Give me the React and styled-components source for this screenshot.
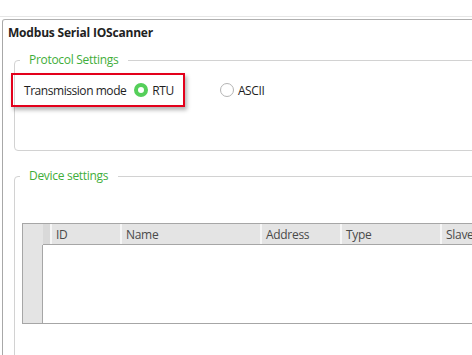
import styled, { createGlobalStyle } from "styled-components";

const GlobalStyle = createGlobalStyle`
  html, body {
    margin: 0;
    padding: 0;
    background: #ffffff;
    overflow: hidden;
  }
  body {
    font-family: "Open Sans", "Noto Sans", sans-serif;
    font-size: 12px;
    color: #1e1e1e;
  }
`;

const Page = styled.div`
  width: 472px;
  height: 355px;
  overflow: hidden;
`;

const TopStrip = styled.div`
  height: 16px;
  border-bottom: 1px solid #e6e6e6;
`;

const Panel = styled.div`
  margin: 2px 0 0 2px;
  width: 640px;
  height: 400px;
  border-top: 1px solid #b0b0b0;
  border-left: 1px solid #a8a8a8;
  border-top-left-radius: 3px;
`;

const Title = styled.div`
  padding: 5px 0 0 5px;
  font-weight: 700;
  font-size: 12px;
  line-height: 16px;
  color: #222;
  letter-spacing: -0.2px;
`;

const Group = styled.fieldset`
  margin: ${(p) => p.$top}px 0 0 11px;
  padding: 0 0 0 5px;
  width: 600px;
  height: ${(p) => p.$height}px;
  border: 1px solid #d2d2d2;
  border-radius: 4px;
  box-sizing: border-box;
`;

const Legend = styled.legend`
  padding: 0 10px 0 9px;
  font-size: 12px;
  line-height: 16px;
  color: #3fae3a;
  letter-spacing: -0.3px;
`;

const ModeRow = styled.div`
  display: flex;
  align-items: center;
  margin: 5px 0 0 -9px;
`;

const Highlight = styled.div`
  display: flex;
  align-items: center;
  gap: 8px;
  height: 30px;
  padding: 0 9px 0 11px;
  border: 2px solid #e3001b;
  box-shadow: 2px 3px 4px rgba(0, 0, 0, 0.3);
`;

const Label = styled.span`
  font-size: 12px;
  letter-spacing: -0.45px;
  color: #1e1e1e;
`;

const Radio = styled.label`
  display: flex;
  align-items: center;
  gap: 4px;
  margin-left: ${(p) => p.$offset || 0}px;
  font-size: 12px;
  letter-spacing: -0.4px;
  color: #1e1e1e;
`;

const Dot = styled.span`
  display: inline-block;
  box-sizing: border-box;
  width: 14px;
  height: 14px;
  border-radius: 50%;
  border: ${(p) => (p.$checked ? "4px solid #55cf5a" : "1px solid #b4b4b4")};
  background: #fff;
`;

const Grid = styled.div`
  margin: 39px 0 0 2px;
  width: 560px;
  height: 99px;
  border: 1px solid #a6a6a6;
  display: grid;
  grid-template-columns: 20px 1fr;
  grid-template-rows: 21px 1fr;
  background: #fff;
`;

const Corner = styled.div`
  background: #e4e4e4;
`;

const HeaderRow = styled.div`
  display: flex;
  background: #e4e4e4;
  border-bottom: 1px solid #a6a6a6;
  padding-left: 7px;
  box-shadow: inset 7px 0 0 #d9d9d9;
`;

const HeaderCell = styled.div`
  width: ${(p) => p.$w}px;
  flex: none;
  box-sizing: border-box;
  padding-left: 4px;
  border-left: 2px solid #f6f6f6;
  font-size: 12px;
  line-height: 21px;
  color: #4a4a4a;
  letter-spacing: -0.3px;
`;

const RowHeader = styled.div`
  background: #e4e4e4;
  border-right: 1px solid #a6a6a6;
`;

const Body = styled.div`
  background: #fff;
`;

const columns = [
  { name: "ID", w: 70 },
  { name: "Name", w: 140 },
  { name: "Address", w: 80 },
  { name: "Type", w: 100 },
  { name: "Slave", w: 100 },
];

export default function App() {
  return (
    <Page>
      <GlobalStyle />
      <TopStrip />
      <Panel>
        <Title>Modbus Serial IOScanner</Title>
        <Group $top={11} $height={99}>
          <Legend>Protocol Settings</Legend>
          <ModeRow>
            <Highlight>
              <Label>Transmission mode</Label>
              <Radio>
                <Dot $checked />
                RTU
              </Radio>
            </Highlight>
            <Radio $offset={35}>
              <Dot />
              ASCII
            </Radio>
          </ModeRow>
        </Group>
        <Group $top={17} $height={220}>
          <Legend>Device settings</Legend>
          <Grid>
            <Corner />
            <HeaderRow>
              {columns.map((c) => (
                <HeaderCell key={c.name} $w={c.w}>
                  {c.name}
                </HeaderCell>
              ))}
            </HeaderRow>
            <RowHeader />
            <Body />
          </Grid>
        </Group>
      </Panel>
    </Page>
  );
}
